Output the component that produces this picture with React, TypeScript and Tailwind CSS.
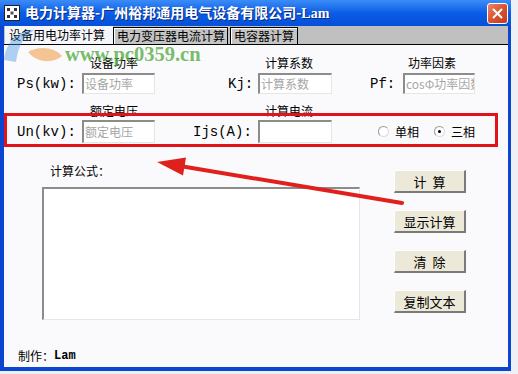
import React from "react";

const cjk = { fontFamily: '"Noto Sans CJK SC", "Noto Sans", sans-serif' };
const mono = { fontFamily: '"Liberation Mono", "Noto Sans CJK SC", monospace' };

const Field: React.FC<{ w: string; placeholder?: string }> = ({ w, placeholder }) => (
  <div
    className={`${w} h-[21px] bg-white border-t-2 border-l-2 border-t-[#8c8c8c] border-l-[#8c8c8c] border-b border-r border-b-[#e6e6e6] border-r-[#e6e6e6] flex items-center overflow-hidden whitespace-nowrap`}
  >
    <span className="text-[12px] leading-none text-[#a6a6a6] pl-[1px]" style={cjk}>
      {placeholder}
    </span>
  </div>
);

const Radio: React.FC<{ checked?: boolean; label: string }> = ({ checked, label }) => (
  <div className="flex items-center">
    <div className="w-[11px] h-[11px] rounded-full bg-white border border-t-[#9a9a9a] border-l-[#9a9a9a] border-b-[#dcdcdc] border-r-[#dcdcdc] flex items-center justify-center">
      {checked && <div className="w-[3px] h-[3px] rounded-full bg-black" />}
    </div>
    <span className="ml-[6px] text-[12px] leading-none text-black" style={cjk}>
      {label}
    </span>
  </div>
);

const Btn: React.FC<{ children: React.ReactNode }> = ({ children }) => (
  <div className="w-[72px] h-[23px] bg-[#ece9d8] border-t border-l border-t-white border-l-white border-b-2 border-r-2 border-b-[#7a7a7a] border-r-[#7a7a7a] flex items-center justify-center">
    <span className="text-[13px] leading-none text-black whitespace-pre" style={cjk}>
      {children}
    </span>
  </div>
);

export default function App() {
  return (
    <div className="relative w-[518px] h-[374px] bg-[#eef0f6] overflow-hidden">
      <div className="w-[511px] h-[371px] bg-[#0a46d0] flex flex-col">
        {/* Title bar */}
        <div className="h-[26px] flex items-center bg-gradient-to-b from-[#3b8cf8] via-[#0a5ce6] to-[#0650d8] pl-[4px] pr-[3px]">
          <svg width="16" height="16" viewBox="0 0 16 16">
            <rect x="0.5" y="0.5" width="15" height="15" fill="#fff" stroke="#222" />
            <rect x="3" y="3" width="3" height="3" fill="#333" />
            <rect x="10" y="3" width="3" height="3" fill="#333" />
            <rect x="6.5" y="6.5" width="3" height="3" fill="#555" />
            <rect x="3" y="10" width="3" height="3" fill="#333" />
            <rect x="10" y="10" width="3" height="3" fill="#333" />
          </svg>
          <span
            className="ml-[5px] text-[14px] font-bold text-white leading-none [text-shadow:1px_1px_0_#0a2a80]"
            style={cjk}
          >
            电力计算器-广州裕邦通用电气设备有限公司-
            <span style={{ fontFamily: '"Liberation Serif", serif' }}>Lam</span>
          </span>
          <div className="ml-auto w-[21px] h-[21px] rounded-[3px] border border-white bg-gradient-to-br from-[#e8866a] via-[#d9532f] to-[#c13c1a] flex items-center justify-center">
            <svg width="11" height="11" viewBox="0 0 11 11">
              <path d="M1.5 1.5 L9.5 9.5 M9.5 1.5 L1.5 9.5" stroke="#fff" strokeWidth="2" strokeLinecap="round" />
            </svg>
          </div>
        </div>

        {/* Client area */}
        <div className="flex-1 ml-[4px] mr-[3px] mb-[4px] flex flex-col bg-[#fafafc]">
          {/* Tabs */}
          <div className="h-[19px] bg-[#c0c0c0] flex items-end border-b border-black">
            <div className="ml-[1px] w-[108px] h-[18px] bg-[#f4f6fb] flex items-center pl-[4px]">
              <span className="text-[12px] leading-none text-black" style={cjk}>
                设备用电功率计算
              </span>
            </div>
            <div className="w-[115px] h-[17px] border border-black border-b-0 bg-[#c4c4c4] shadow-[inset_1px_1px_0_#fff] flex items-center pl-[3px]">
              <span className="text-[12px] leading-none text-black" style={cjk}>
                电力变压器电流计算
              </span>
            </div>
            <div className="ml-[2px] w-[68px] h-[17px] border border-black border-b-0 bg-[#c4c4c4] shadow-[inset_1px_1px_0_#fff] flex items-center pl-[3px]">
              <span className="text-[12px] leading-none text-black" style={cjk}>
                电容器计算
              </span>
            </div>
          </div>

          {/* Row 1 */}
          <div className="flex mt-[11px] text-[12px] leading-[14px] text-black" style={cjk}>
            <span className="ml-[86px]">设备功率</span>
            <span className="ml-[127px]">计算系数</span>
            <span className="ml-[95px]">功率因素</span>
          </div>
          <div className="flex items-center mt-[3px]">
            <span className="ml-[13px] w-[65px] text-[14px] leading-none" style={mono}>Ps(kw):</span>
            <Field w="w-[73px]" placeholder="设备功率" />
            <span className="ml-[73px] w-[30px] text-[14px] leading-none" style={mono}>Kj:</span>
            <Field w="w-[74px]" placeholder="计算系数" />
            <span className="ml-[38px] w-[33px] text-[14px] leading-none" style={mono}>Pf:</span>
            <Field w="w-[72px]" placeholder="cosΦ功率因数" />
          </div>

          {/* Row 2 */}
          <div className="flex mt-[10px] text-[12px] leading-[14px] text-black" style={cjk}>
            <span className="ml-[86px]">额定电压</span>
            <span className="ml-[127px]">计算电流</span>
          </div>
          <div className="flex items-center mt-[2px]">
            <span className="ml-[13px] w-[65px] text-[14px] leading-none" style={mono}>Un(kv):</span>
            <Field w="w-[73px] h-[23px]" placeholder="额定电压" />
            <span className="ml-[38px] w-[65px] text-[14px] leading-none" style={mono}>Ijs(A):</span>
            <Field w="w-[74px] h-[23px]" />
            <div className="ml-[46px]">
              <Radio label="单相" />
            </div>
            <div className="ml-[15px]">
              <Radio checked label="三相" />
            </div>
          </div>

          {/* Formula + buttons */}
          <div className="flex mt-[21px]">
            <div className="ml-[38px] flex flex-col">
              <span className="ml-[8px] text-[12px] leading-[14px] text-black" style={cjk}>
                计算公式：
              </span>
              <div className="mt-[9px] w-[318px] h-[133px] bg-white border-t-2 border-l-2 border-t-[#8c8c8c] border-l-[#8c8c8c] border-b border-r border-b-[#e6e6e6] border-r-[#e6e6e6]" />
            </div>
            <div className="ml-[34px] mt-[6px] flex flex-col gap-[17px]">
              <Btn>{"计  算"}</Btn>
              <Btn>显示计算</Btn>
              <Btn>{"清  除"}</Btn>
              <Btn>复制文本</Btn>
            </div>
          </div>

          <div className="mt-[30px] ml-[14px] flex items-center text-[12px] leading-none text-black">
            <span style={cjk}>制作：</span>
            <span className="font-bold" style={mono}>Lam</span>
          </div>
        </div>
      </div>

      {/* Watermark + annotations */}
      <svg className="absolute inset-0 pointer-events-none" width="518" height="374" viewBox="0 0 518 374">
        <path d="M4 60 C 6 40, 20 30, 34 30 C 24 36, 18 46, 16 62 Z" fill="#3a8fe0" opacity="0.4" />
        <path d="M28 52 C 40 45, 55 48, 62 56 C 54 63, 38 64, 28 52 Z" fill="#f0a050" opacity="0.6" />
        <text
          x="65"
          y="61"
          fill="#4fa83a"
          opacity="0.75"
          fontSize="20.5"
          fontWeight="bold"
          fontFamily='"Liberation Serif", serif'
        >
          www.pc0359.cn
        </text>
        <rect x="5.5" y="114.5" width="491" height="31" fill="none" stroke="#e0141a" strokeWidth="3" />
        <line x1="402" y1="203" x2="180" y2="166" stroke="#e0201c" strokeWidth="4" strokeLinecap="round" />
        <polygon points="157,162 186,157.5 183,175.5" fill="#e0201c" />
      </svg>
    </div>
  );
}
